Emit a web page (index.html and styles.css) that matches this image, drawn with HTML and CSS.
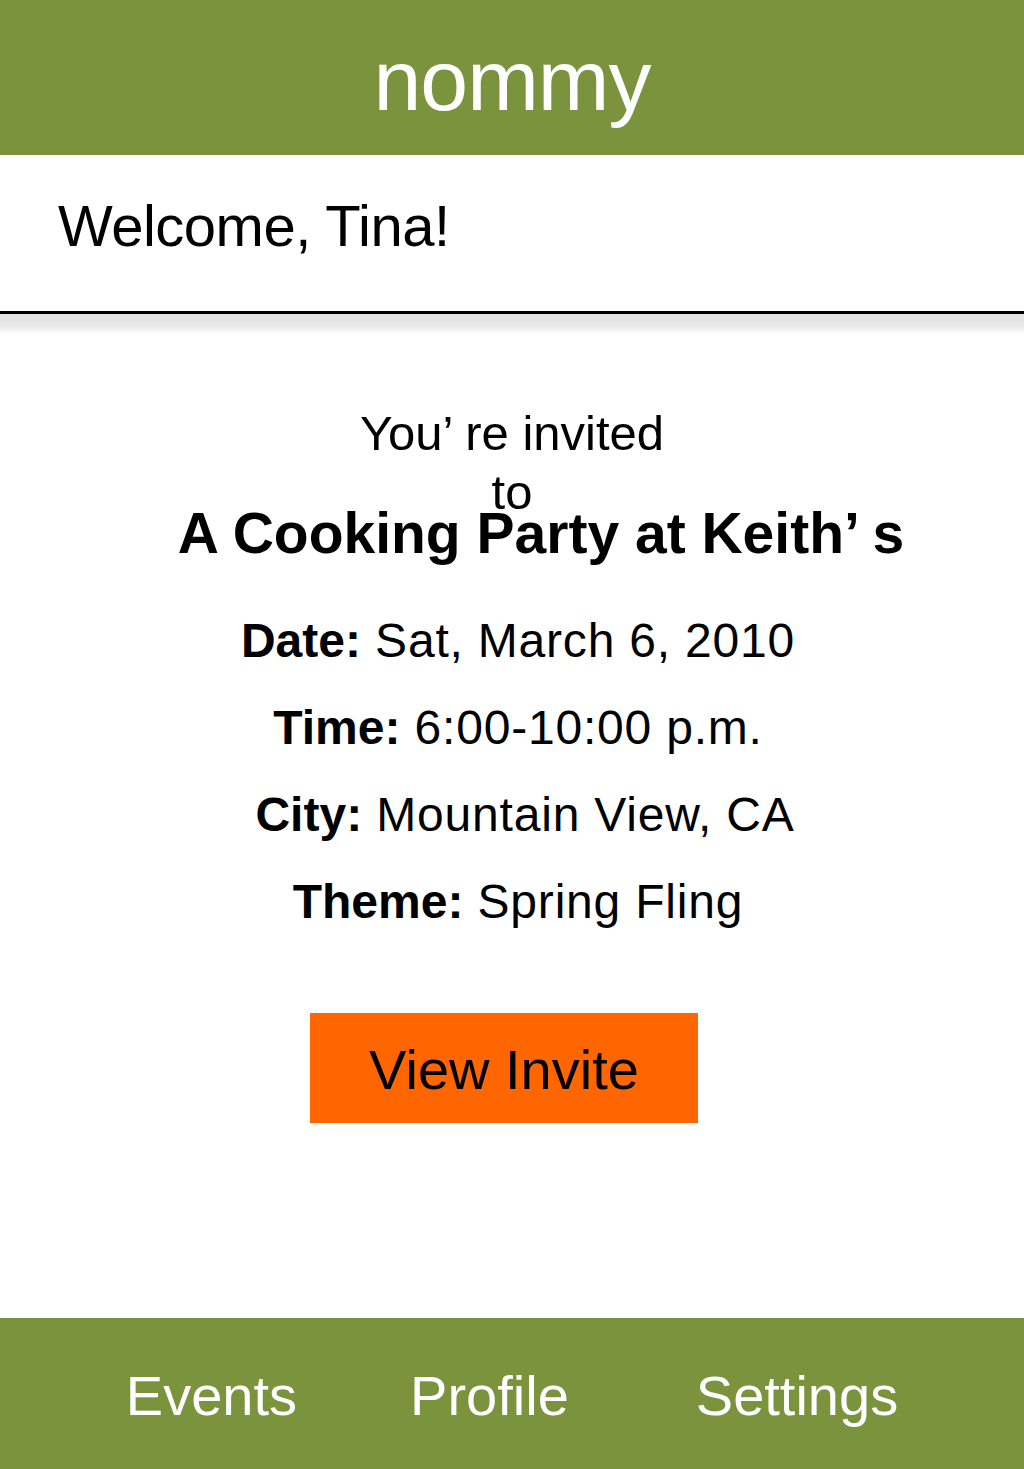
FILE: index.html
```html
<!DOCTYPE html>
<html lang="en">
<head>
<meta charset="utf-8">
<title>nommy</title>
<link rel="stylesheet" href="styles.css">
</head>
<body>
<div class="app">
  <header class="topbar">nommy</header>
  <section class="welcome">Welcome, Tina!</section>
  <div class="rule"></div>
  <div class="rule-shadow"></div>
  <main class="content">
    <p class="invited">You’ re invited to</p>
    <h1 class="title">A Cooking Party at Keith’ s</h1>
    <div class="details">
      <p class="row"><b>Date:</b> Sat, March 6, 2010</p>
      <p class="row"><b>Time:</b> 6:00-10:00 p.m.</p>
      <p class="row row-city"><b>City:</b> Mountain View, CA</p>
      <p class="row"><b>Theme:</b> Spring Fling</p>
    </div>
    <div class="btn">View Invite</div>
  </main>
  <nav class="tabbar">
    <span class="tab">Events</span>
    <span class="tab tab-mid">Profile</span>
    <span class="tab">Settings</span>
  </nav>
</div>
</body>
</html>
```
FILE: styles.css
```css
html, body {
  margin: 0;
  padding: 0;
  background: #ffffff;
}
body {
  font-family: "Liberation Sans", Arial, Helvetica, sans-serif;
  color: #000;
}
.app {
  width: 1024px;
  height: 1469px;
  display: flex;
  flex-direction: column;
  overflow: hidden;
}
.topbar {
  height: 155px;
  box-sizing: border-box;
  padding-top: 37px;
  background: #7b933c;
  color: #fff;
  text-align: center;
  font-size: 86px;
  line-height: 86px;
  letter-spacing: -1px;
  flex: none;
}
.welcome {
  height: 156px;
  box-sizing: border-box;
  padding: 42px 0 0 58px;
  font-size: 58px;
  line-height: 58px;
  letter-spacing: -0.5px;
  flex: none;
}
.rule {
  height: 3px;
  background: #000;
  flex: none;
}
.rule-shadow {
  height: 20px;
  background: linear-gradient(#e2e2e2, #e8e8e8 60%, #ffffff);
  flex: none;
}
.content {
  flex: 1;
  display: flex;
  flex-direction: column;
  align-items: stretch;
}
.invited {
  margin: 70px auto 0;
  width: 340px;
  padding-left: 0;
  text-align: center;
  font-size: 49px;
  line-height: 59px;
}
.title {
  margin: -17px 0 0;
  padding-left: 58px;
  text-align: center;
  font-size: 57px;
  line-height: 57px;
  font-weight: bold;
}
.details {
  margin-top: 35px;
  padding-left: 12px;
  text-align: center;
}
.row {
  margin: 0;
  font-size: 48px;
  line-height: 87px;
  letter-spacing: 0.8px;
}
.row b {
  letter-spacing: 0;
}
.row-city {
  padding-left: 14px;
}
.btn {
  margin: 68px 0 0 310px;
  width: 388px;
  height: 110px;
  box-sizing: border-box;
  padding-top: 4px;
  background: #ff6600;
  display: flex;
  align-items: center;
  justify-content: center;
  font-size: 56px;
  line-height: 56px;
}
.tabbar {
  height: 151px;
  box-sizing: border-box;
  padding-top: 50px;
  background: #7b933c;
  color: #fff;
  display: flex;
  justify-content: center;
  gap: 113px;
  font-size: 56px;
  line-height: 56px;
  flex: none;
}
.tab-mid {
  margin-right: 14px;
}
```
